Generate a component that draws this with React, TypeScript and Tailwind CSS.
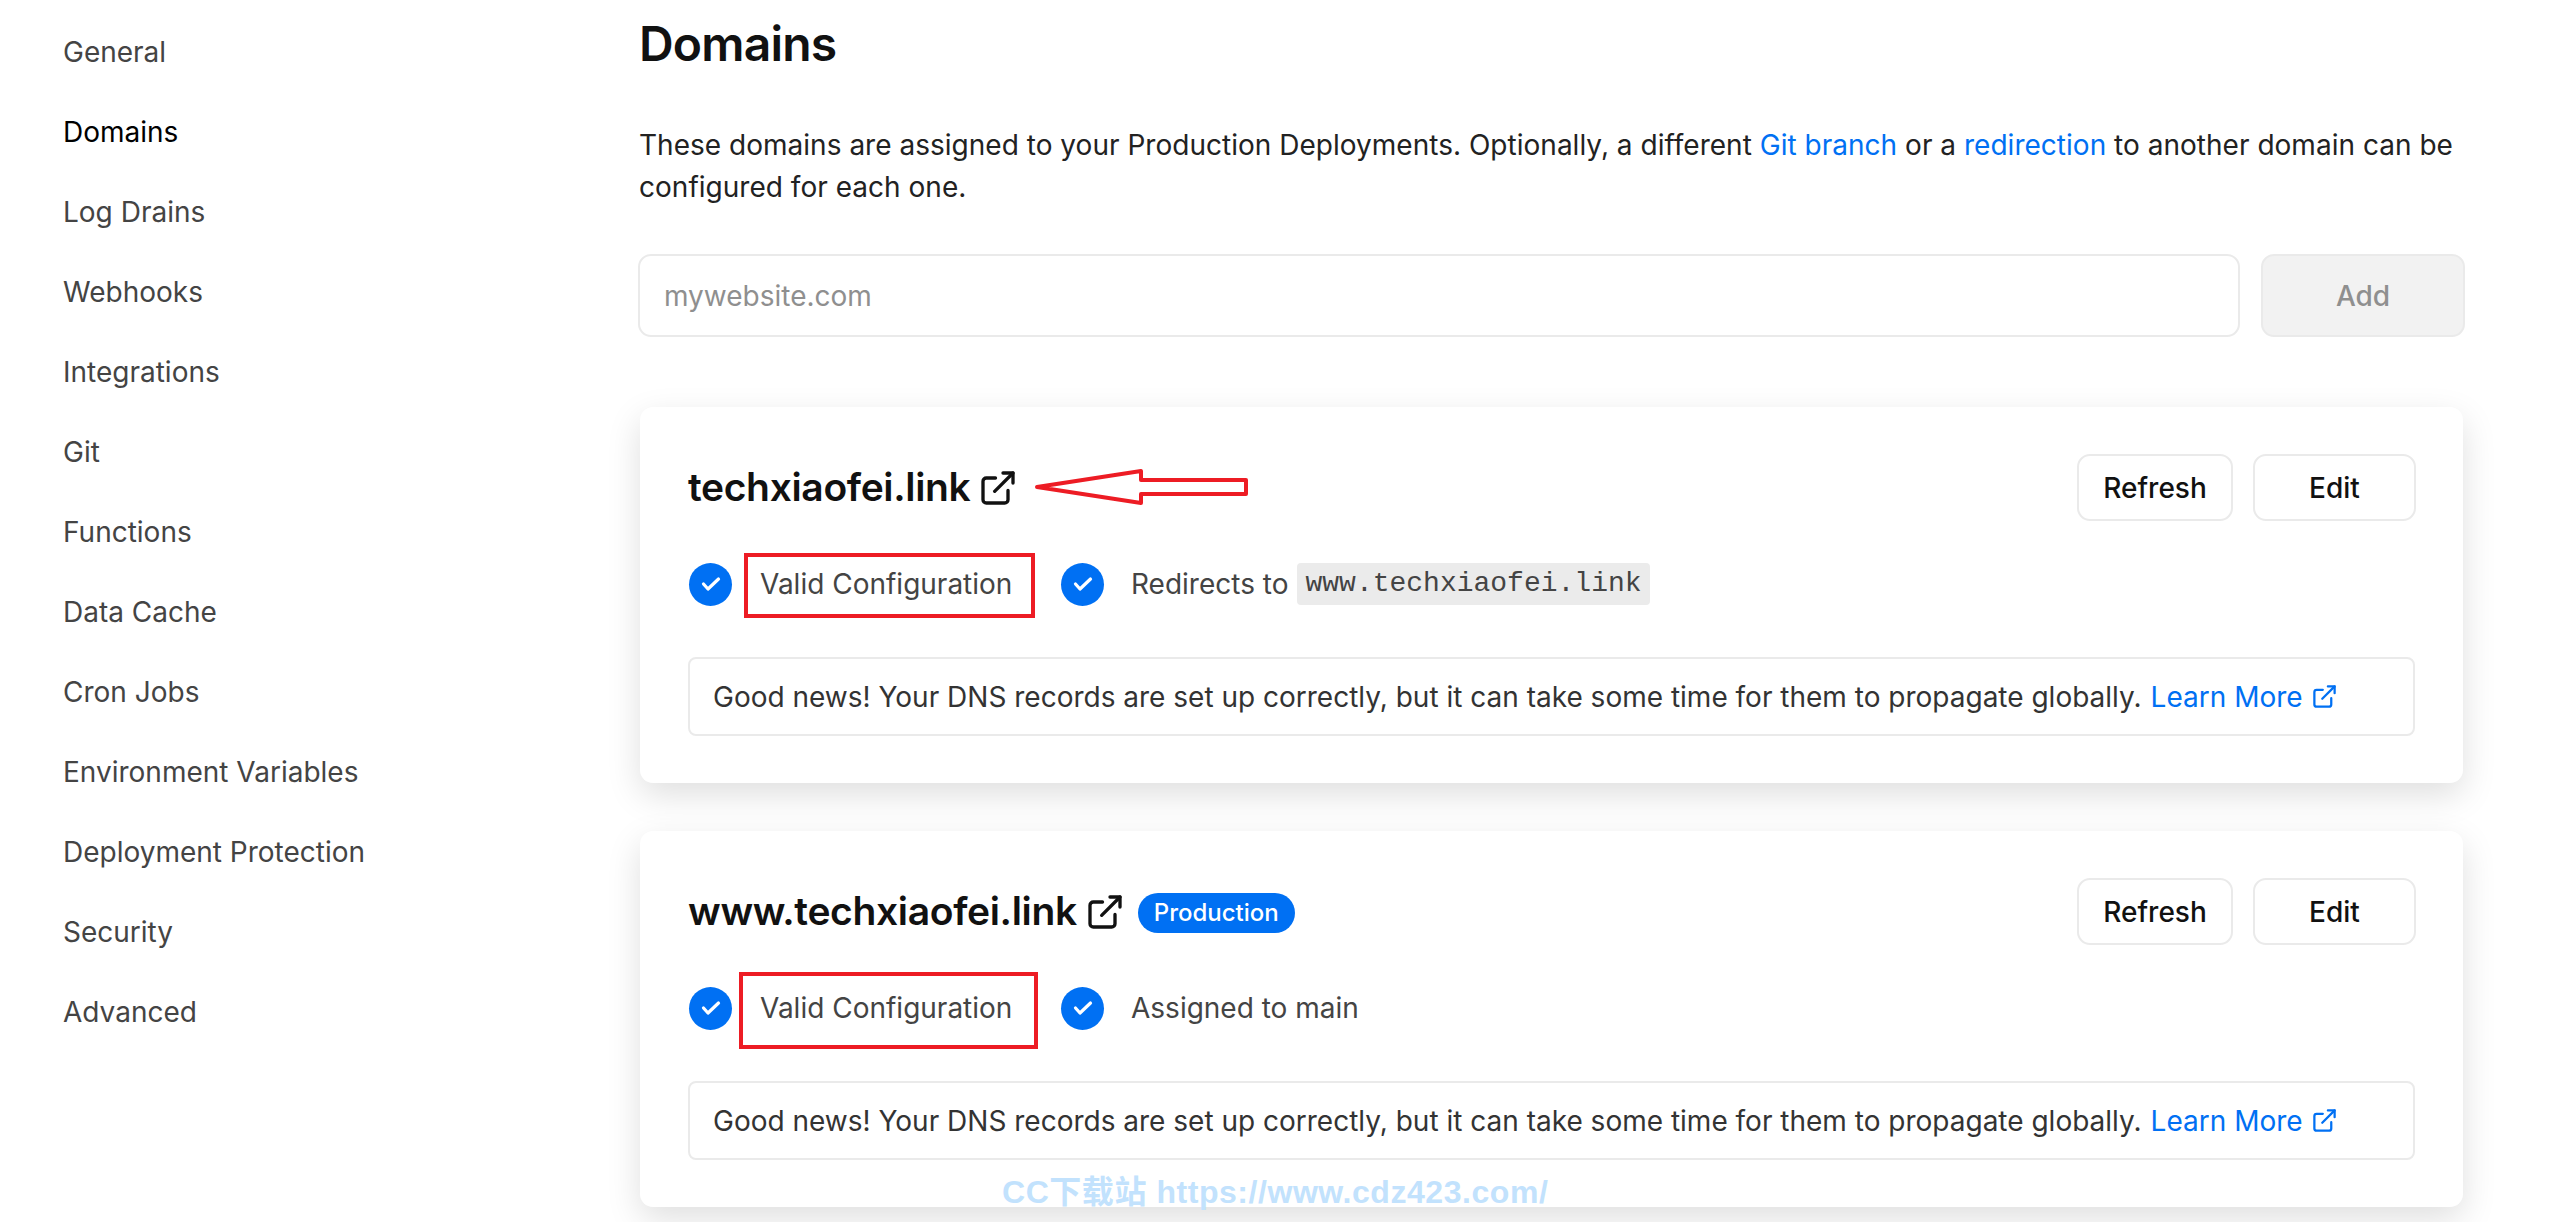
import React from "react";

const navItems = ["General", "Domains", "Log Drains", "Webhooks", "Integrations", "Git", "Functions", "Data Cache", "Cron Jobs", "Environment Variables", "Deployment Protection", "Security", "Advanced"];

const LinkIcon: React.FC<{ className: string }> = ({ className }) => (
  <svg viewBox="0 0 24 24" fill="none" stroke="currentColor" strokeWidth="2" strokeLinecap="round" strokeLinejoin="round" className={className}>
    <path d="M18 13.5V19a2 2 0 0 1-2 2H5a2 2 0 0 1-2-2V8a2 2 0 0 1 2-2h5.5" />
    <path d="M15 3h6v6" />
    <path d="M10 14 21 3" />
  </svg>
);

const Check: React.FC = () => (
  <span className="w-[43px] h-[43px] rounded-full bg-[#0070f3] flex items-center justify-center shrink-0">
    <svg viewBox="0 0 24 24" fill="none" stroke="#fff" strokeWidth="3.2" strokeLinecap="round" strokeLinejoin="round" className="w-[24px] h-[24px]">
      <path d="M4.5 12 9 17 19.5 7" />
    </svg>
  </span>
);

const DomainCard: React.FC<{ name: string; production?: boolean; children: React.ReactNode }> = ({ name, production, children }) => (
  <div className="mx-[2px] rounded-[13px] bg-white px-[48px] pt-[47px] pb-[47px] shadow-[0_12px_34px_rgba(0,0,0,0.13)]">
    <div className="flex items-center justify-between h-[67px] -mr-[1px]">
      <div className="flex items-center text-[#111]">
        <span className="text-[39px] font-semibold tracking-[-0.35px]">{name}</span>
        <LinkIcon className="w-[40px] h-[40px] ml-[8px]" />
        {production && (
          <span className="ml-[13px] mt-[3px] h-[40px] px-[16px] rounded-full bg-[#0070f3] text-white text-[24px] font-medium flex items-center">Production</span>
        )}
      </div>
      <div className="flex gap-[20px]">
        <button className="w-[156px] h-[67px] rounded-[13px] border-2 border-[#eaeaea] text-[#111] text-[28px] font-medium">Refresh</button>
        <button className="w-[163px] h-[67px] rounded-[13px] border-2 border-[#eaeaea] text-[#111] text-[28px] font-medium">Edit</button>
      </div>
    </div>
    <div className="mt-[41px] h-[44px] flex items-center text-[#444] text-[28px]">
      <span className="ml-[1px]">
        <Check />
      </span>
      <span className="ml-[28px] w-[301px]">Valid Configuration</span>
      <Check />
      {children}
    </div>
    <div className="mt-[51px] h-[79px] rounded-[8px] border-2 border-[#eaeaea] px-[24px] flex items-center text-[#333] text-[28px]">
      <span className="-ml-[1px]">Good news! Your DNS records are set up correctly, but it can take some time for them to propagate globally.</span>
      <span className="ml-[9px] text-[#0070f3] flex items-center">
        Learn More
        <LinkIcon className="w-[27px] h-[27px] ml-[8px]" />
      </span>
    </div>
  </div>
);

export default function App() {
  return (
    <div className="relative h-[1222px] w-[2551px] overflow-hidden bg-white flex font-['Inter',sans-serif]">
      <aside className="w-[638px] shrink-0 pl-[63px] pt-[12px]">
        {navItems.map((item) => (
          <div key={item} className={`h-[80px] flex items-center text-[28px] ${item === "Domains" ? "text-black" : "text-[#444]"}`}>
            {item}
          </div>
        ))}
      </aside>

      <main className="w-[1827px] shrink-0">
        <h1 className="mt-[10px] pl-[1px] h-[68px] flex items-center text-[48px] font-semibold tracking-[-0.8px] text-[#111]">Domains</h1>
        <p className="mt-[46px] pl-[1px] text-[28px] leading-[42px] tracking-[0.02px] text-[#222]">
          These domains are assigned to your Production Deployments. Optionally, a different{" "}
          <span className="text-[#0070f3]">Git branch</span> or a <span className="text-[#0070f3]">redirection</span> to another domain can be configured for each one.
        </p>
        <div className="mt-[46px] flex gap-[21px]">
          <div className="w-[1602px] h-[83px] rounded-[13px] border-2 border-[#eaeaea] px-[24px] flex items-center text-[28px] text-[#8f8f8f]">mywebsite.com</div>
          <button className="w-[204px] h-[83px] rounded-[13px] border-2 border-[#eaeaea] bg-[#f2f2f2] text-[28px] font-medium text-[#8f8f8f]">Add</button>
        </div>

        <div className="mt-[70px] flex flex-col gap-[48px]">
          <DomainCard name="techxiaofei.link">
            <span className="ml-[27px] text-[#444]">Redirects to</span>
            <code className="ml-[9px] h-[42px] px-[8px] rounded-[4px] bg-[#ebebeb] flex items-center font-['Liberation_Mono',monospace] text-[28px]">www.techxiaofei.link</code>
          </DomainCard>
          <DomainCard name="www.techxiaofei.link" production>
            <span className="ml-[27px]">Assigned to main</span>
          </DomainCard>
        </div>
      </main>

      {/* red annotations drawn over the screenshot */}
      <div className="absolute left-[744px] top-[553px] w-[291px] h-[65px] border-4 border-[#ed1c24]" />
      <div className="absolute left-[739px] top-[972px] w-[299px] h-[77px] border-4 border-[#ed1c24]" />
      <svg className="absolute left-[1030px] top-[465px] w-[224px] h-[46px]" viewBox="0 0 224 46" fill="none" stroke="#ed1c24" strokeWidth="4" strokeLinejoin="round">
        <path d="M7 22 111 6v9h105v14H111v9z" />
      </svg>

      <div className="absolute left-[1002px] top-[1172px] text-[32px] leading-[40px] font-bold tracking-[0.55px] text-[#c2e2fd] font-['Liberation_Sans','Noto_Sans_CJK_SC',sans-serif] whitespace-nowrap">
        CC下载站 https://www.cdz423.com/
      </div>
    </div>
  );
}
